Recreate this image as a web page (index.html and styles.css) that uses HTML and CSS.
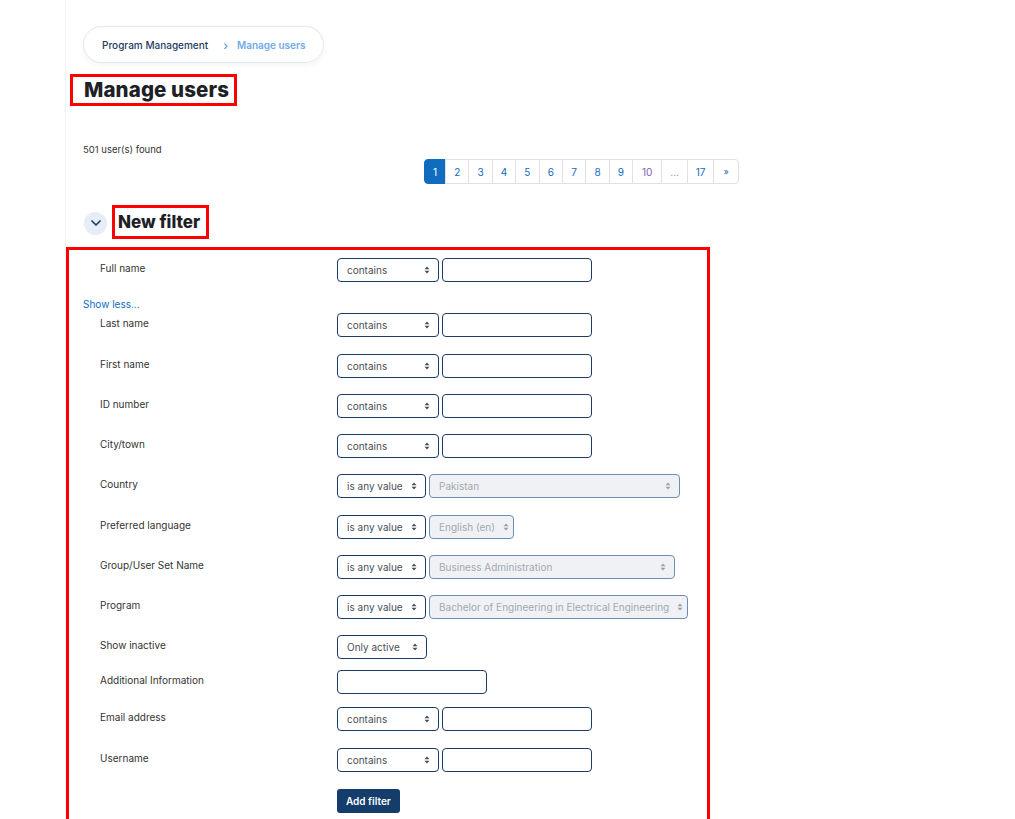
FILE: index.html
```html
<!DOCTYPE html>
<html lang="en">
  <head>
    <meta charset="UTF-8" />
    <meta name="viewport" content="width=device-width, initial-scale=1.0" />
    <title>Manage users</title>
    <link rel="stylesheet" href="styles.css">
  </head>
  <body>
    <div class="page">
      <div class="breadcrumb-wrap">
        <nav class="breadcrumb">
          <a href="#" class="crumb">Program Management</a>
          <span class="crumb-sep">›</span>
          <span class="crumb current">Manage users</span>
        </nav>
      </div>

      <div>
        <h2 class="page-title marked">Manage users</h2>
      </div>

      <p class="found">501 user(s) found</p>

      <ul class="pagination">
        <li class="active">1</li>
        <li>2</li>
        <li>3</li>
        <li>4</li>
        <li>5</li>
        <li>6</li>
        <li>7</li>
        <li>8</li>
        <li>9</li>
        <li class="visited">10</li>
        <li class="dots">...</li>
        <li class="last-page">17</li>
        <li class="next">»</li>
      </ul>

      <div class="section-head">
        <span class="collapse-btn">
          <svg width="14" height="14" viewBox="0 0 14 14">
            <path d="M3 5 L7 9 L11 5" fill="none" stroke="#1d3b63" stroke-width="1.7" stroke-linecap="round" stroke-linejoin="round"/>
          </svg>
        </span>
        <h3 class="section-title marked">New filter</h3>
      </div>

      <form class="filter-box">
        <div class="fitem">
          <label>Full name</label>
          <div class="controls">
            <div class="select w-op">contains<svg class="arr" width="6" height="8" viewBox="0 0 6 8"><path d="M0.5 3.2 L3 0.6 L5.5 3.2Z M0.5 4.8 L3 7.4 L5.5 4.8Z" fill="#495057"/></svg></div>
            <input type="text" class="text-input" />
          </div>
        </div>

        <a href="#" class="show-less">Show less...</a>

        <div class="fitem">
          <label>Last name</label>
          <div class="controls">
            <div class="select w-op">contains<svg class="arr" width="6" height="8" viewBox="0 0 6 8"><path d="M0.5 3.2 L3 0.6 L5.5 3.2Z M0.5 4.8 L3 7.4 L5.5 4.8Z" fill="#495057"/></svg></div>
            <input type="text" class="text-input" />
          </div>
        </div>

        <div class="fitem">
          <label>First name</label>
          <div class="controls">
            <div class="select w-op">contains<svg class="arr" width="6" height="8" viewBox="0 0 6 8"><path d="M0.5 3.2 L3 0.6 L5.5 3.2Z M0.5 4.8 L3 7.4 L5.5 4.8Z" fill="#495057"/></svg></div>
            <input type="text" class="text-input" />
          </div>
        </div>

        <div class="fitem">
          <label>ID number</label>
          <div class="controls">
            <div class="select w-op">contains<svg class="arr" width="6" height="8" viewBox="0 0 6 8"><path d="M0.5 3.2 L3 0.6 L5.5 3.2Z M0.5 4.8 L3 7.4 L5.5 4.8Z" fill="#495057"/></svg></div>
            <input type="text" class="text-input" />
          </div>
        </div>

        <div class="fitem">
          <label>City/town</label>
          <div class="controls">
            <div class="select w-op">contains<svg class="arr" width="6" height="8" viewBox="0 0 6 8"><path d="M0.5 3.2 L3 0.6 L5.5 3.2Z M0.5 4.8 L3 7.4 L5.5 4.8Z" fill="#495057"/></svg></div>
            <input type="text" class="text-input" />
          </div>
        </div>

        <div class="fitem">
          <label>Country</label>
          <div class="controls">
            <div class="select w-any">is any value<svg class="arr" width="6" height="8" viewBox="0 0 6 8"><path d="M0.5 3.2 L3 0.6 L5.5 3.2Z M0.5 4.8 L3 7.4 L5.5 4.8Z" fill="#495057"/></svg></div>
            <div class="select disabled w-country">Pakistan<svg class="arr" width="6" height="8" viewBox="0 0 6 8"><path d="M0.5 3.2 L3 0.6 L5.5 3.2Z M0.5 4.8 L3 7.4 L5.5 4.8Z" fill="#9aa1a9"/></svg></div>
          </div>
        </div>

        <div class="fitem">
          <label>Preferred language</label>
          <div class="controls">
            <div class="select w-any">is any value<svg class="arr" width="6" height="8" viewBox="0 0 6 8"><path d="M0.5 3.2 L3 0.6 L5.5 3.2Z M0.5 4.8 L3 7.4 L5.5 4.8Z" fill="#495057"/></svg></div>
            <div class="select disabled w-lang">English (en)<svg class="arr" width="6" height="8" viewBox="0 0 6 8"><path d="M0.5 3.2 L3 0.6 L5.5 3.2Z M0.5 4.8 L3 7.4 L5.5 4.8Z" fill="#9aa1a9"/></svg></div>
          </div>
        </div>

        <div class="fitem">
          <label>Group/User Set Name</label>
          <div class="controls">
            <div class="select w-any">is any value<svg class="arr" width="6" height="8" viewBox="0 0 6 8"><path d="M0.5 3.2 L3 0.6 L5.5 3.2Z M0.5 4.8 L3 7.4 L5.5 4.8Z" fill="#495057"/></svg></div>
            <div class="select disabled w-group">Business Administration<svg class="arr" width="6" height="8" viewBox="0 0 6 8"><path d="M0.5 3.2 L3 0.6 L5.5 3.2Z M0.5 4.8 L3 7.4 L5.5 4.8Z" fill="#9aa1a9"/></svg></div>
          </div>
        </div>

        <div class="fitem">
          <label>Program</label>
          <div class="controls">
            <div class="select w-any">is any value<svg class="arr" width="6" height="8" viewBox="0 0 6 8"><path d="M0.5 3.2 L3 0.6 L5.5 3.2Z M0.5 4.8 L3 7.4 L5.5 4.8Z" fill="#495057"/></svg></div>
            <div class="select disabled w-program">Bachelor of Engineering in Electrical Engineering<svg class="arr" width="6" height="8" viewBox="0 0 6 8"><path d="M0.5 3.2 L3 0.6 L5.5 3.2Z M0.5 4.8 L3 7.4 L5.5 4.8Z" fill="#9aa1a9"/></svg></div>
          </div>
        </div>

        <div class="fitem tight">
          <label>Show inactive</label>
          <div class="controls">
            <div class="select w-active">Only active<svg class="arr" width="6" height="8" viewBox="0 0 6 8"><path d="M0.5 3.2 L3 0.6 L5.5 3.2Z M0.5 4.8 L3 7.4 L5.5 4.8Z" fill="#495057"/></svg></div>
          </div>
        </div>

        <div class="fitem mid">
          <label>Additional Information</label>
          <div class="controls">
            <input type="text" class="text-input" />
          </div>
        </div>

        <div class="fitem">
          <label>Email address</label>
          <div class="controls">
            <div class="select w-op">contains<svg class="arr" width="6" height="8" viewBox="0 0 6 8"><path d="M0.5 3.2 L3 0.6 L5.5 3.2Z M0.5 4.8 L3 7.4 L5.5 4.8Z" fill="#495057"/></svg></div>
            <input type="text" class="text-input" />
          </div>
        </div>

        <div class="fitem wide">
          <label>Username</label>
          <div class="controls">
            <div class="select w-op">contains<svg class="arr" width="6" height="8" viewBox="0 0 6 8"><path d="M0.5 3.2 L3 0.6 L5.5 3.2Z M0.5 4.8 L3 7.4 L5.5 4.8Z" fill="#495057"/></svg></div>
            <input type="text" class="text-input" />
          </div>
        </div>

        <div class="fitem">
          <label></label>
          <div class="controls">
            <button type="button" class="btn-primary">Add filter</button>
          </div>
        </div>
      </form>
    </div>
  </body>
</html>
```

FILE: styles.css
```css
* {
  margin: 0;
  padding: 0;
  box-sizing: border-box;
}

body {
  font-family: Inter, "Open Sans", sans-serif;
  font-size: 10px;
  color: #333;
  background: #fff;
  overflow: hidden;
}

.page {
  margin-left: 65px;
  border-left: 1px solid #f2f2f2;
  padding: 26px 0 0 17px;
  min-height: 819px;
}

/* Breadcrumb */
.breadcrumb-wrap {
  display: flex;
}

.breadcrumb {
  display: flex;
  align-items: center;
  height: 37px;
  padding: 0 18px;
  border: 1px solid #e2e8f0;
  border-radius: 19px;
  box-shadow: 0 2px 6px rgba(0, 0, 0, 0.05);
  font-size: 10px;
  font-weight: 500;
}

.crumb {
  color: #1d3b63;
  text-decoration: none;
}

.crumb-sep {
  color: #5b9be0;
  margin: 0 9px 0 15px;
  font-size: 12px;
  line-height: 1;
  position: relative;
  top: 1px;
}

.crumb.current {
  color: #72aaea;
  font-weight: 600;
}

/* Red highlight boxes */
.marked {
  display: inline-block;
  border: 3px solid #ff0000;
}

.page-title {
  margin: 11px 0 0 -13px;
  padding: 0 5px 0 11px;
  height: 32px;
  line-height: 25px;
  font-size: 20.5px;
  font-weight: 800;
  color: #1d2125;
  letter-spacing: 0.1px;
  vertical-align: top;
}

.found {
  margin-top: 38px;
  font-size: 9.5px;
  color: #333;
}

/* Pagination */
.pagination {
  list-style: none;
  display: flex;
  margin: 4px 0 0 341px;
  height: 25px;
}

.pagination li {
  min-width: 24.4px;
  height: 25px;
  display: flex;
  align-items: center;
  justify-content: center;
  border: 1px solid #dee2e6;
  margin-left: -1px;
  color: #0f6cbf;
  font-size: 10px;
  padding: 0 5px;
}

.pagination li:first-child {
  margin-left: 0;
  border-radius: 4px 0 0 4px;
}

.pagination li:last-child {
  border-radius: 0 4px 4px 0;
  font-size: 9px;
  width: 26px;
}

.pagination li.active {
  background: #0f6cbf;
  border-color: #0f6cbf;
  color: #fff;
  width: 22px;
  min-width: 22px;
}

.pagination li.visited {
  color: #7c5fa8;
  width: 30px;
}

.pagination li.dots {
  color: #8a9099;
  width: 27px;
}

.pagination li.last-page {
  width: 27px;
}

/* Section header */
.section-head {
  display: flex;
  align-items: center;
  margin-top: 21px;
}

.collapse-btn {
  width: 23px;
  height: 23px;
  border-radius: 50%;
  background: #e6edf6;
  display: flex;
  align-items: center;
  justify-content: center;
  margin: 2px 5px 0 1px;
}

.section-title {
  height: 34px;
  padding: 0 6px 0 3px;
  line-height: 28px;
  font-size: 17px;
  font-weight: 800;
  color: #1d2125;
}

/* Filter form */
.filter-box {
  margin: 8px 0 0 -17px;
  width: 644px;
  border: 3px solid #ff0000;
  border-bottom: none;
  padding: 8px 0 0 14px;
  min-height: 600px;
}

.fitem {
  display: flex;
  align-items: flex-start;
  margin-bottom: 16.25px;
}

.fitem.tight {
  margin-bottom: 11px;
}

.fitem.mid {
  margin-bottom: 13px;
}

.fitem.wide {
  margin-bottom: 17px;
}

.fitem label {
  width: 254px;
  padding: 4px 0 0 17px;
  font-size: 10px;
  color: #333;
  flex-shrink: 0;
}

.controls {
  display: flex;
  gap: 3px;
}

.show-less {
  display: block;
  color: #0f6cbf;
  text-decoration: none;
  font-size: 10px;
  margin: 0 0 3px 0;
  line-height: 12px;
}

.select {
  height: 24px;
  display: flex;
  align-items: center;
  justify-content: space-between;
  padding: 0 8px 0 9px;
  border: 1px solid #1d3b63;
  border-radius: 4px;
  color: #495057;
  font-size: 10px;
  white-space: nowrap;
  background: #fff;
}

.select .arr {
  flex-shrink: 0;
  margin-left: 8px;
}

.select.disabled {
  background: #eff1f4;
  border-color: #6e8db3;
  color: #a3a9b0;
}

.w-op { width: 102px; }
.w-any { width: 89px; }
.w-active { width: 90px; }
.w-country { width: 251px; }
.w-lang { width: 85px; }
.w-group { width: 246px; }
.w-program { width: 259px; padding-right: 5px; }

.text-input {
  width: 150px;
  height: 24px;
  border: 1px solid #1d3b63;
  border-radius: 4px;
  background: #fff;
}

.btn-primary {
  height: 24px;
  padding: 0 9px;
  background: #143d6b;
  border: none;
  border-radius: 3px;
  color: #fff;
  font-family: Inter, sans-serif;
  font-weight: 600;
  font-size: 10px;
}
```
